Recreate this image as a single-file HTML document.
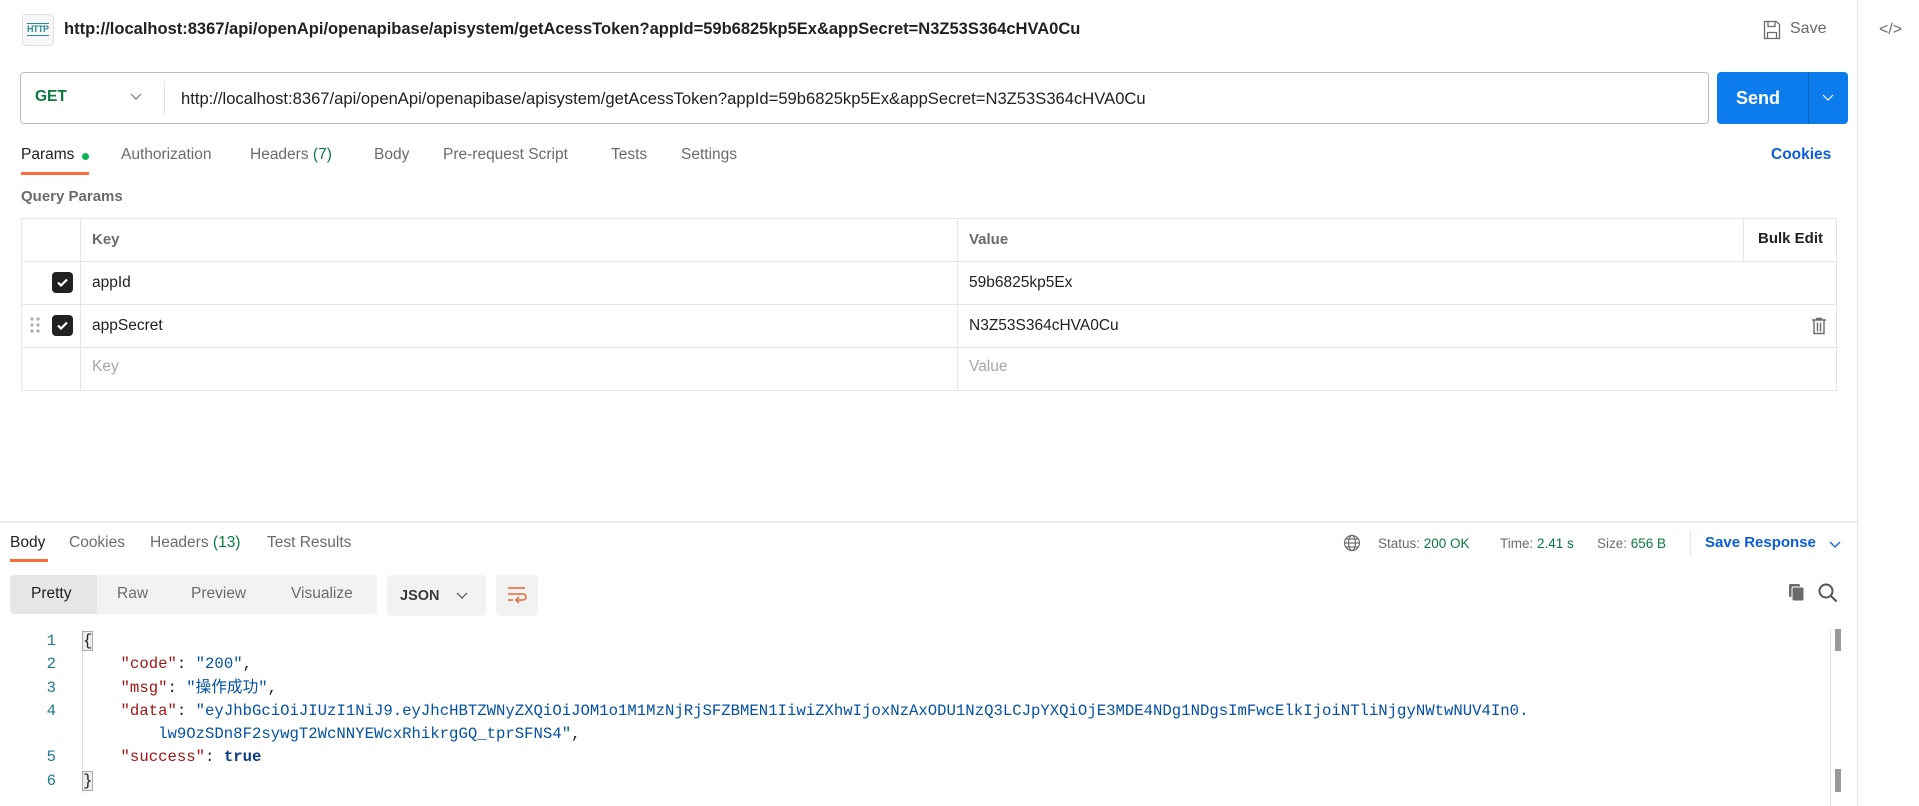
<!DOCTYPE html>
<html><head><meta charset="utf-8"><style>
*{box-sizing:border-box;margin:0;padding:0}
body{width:1919px;height:806px;background:#fff;font-family:"Liberation Sans","Noto Sans CJK SC",sans-serif;color:#212121;position:relative;overflow:hidden;font-size:15.5px}
.a{position:absolute;white-space:nowrap}
.tab{color:#6b6b6b}
.mono{font-family:"Liberation Mono","Noto Sans CJK SC",monospace;font-size:15.65px}
.k{color:#a31515}.s{color:#0451a5}
.hl{position:absolute;background:#e6e6e6;height:1px}
.vl{position:absolute;background:#e6e6e6;width:1px}
.cb{position:absolute;width:21px;height:21px;background:#212121;border-radius:4px}
.st{font-size:13.5px;color:#6b6b6b;top:536px}
</style></head><body>
<!-- top title -->
<div class="a" style="left:22px;top:14px;width:32px;height:32px;border:1px solid #e0e0e0;border-radius:4px;background:#f7f7f7"></div>
<div class="a" style="left:27px;top:23px;font-size:9px;color:#2b8a9a;font-weight:bold;letter-spacing:-0.5px;border-top:1px solid #2b8a9a;border-bottom:1px solid #2b8a9a;line-height:11px">HTTP</div>
<div class="a" style="left:64px;top:20px;font-size:16.5px;font-weight:bold;color:#212121">http://localhost:8367/api/openApi/openapibase/apisystem/getAcessToken?appId=59b6825kp5Ex&amp;appSecret=N3Z53S364cHVA0Cu</div>
<svg class="a" style="left:1763px;top:20px" width="18" height="20" viewBox="0 0 18 20"><path d="M1.5 1.5h12l3 3v14h-15z M5 1.5v5h7v-5 M4.5 18.5v-6h9v6" fill="none" stroke="#6b6b6b" stroke-width="1.3"/></svg>
<div class="a" style="left:1790px;top:20px;font-size:16px;color:#6b6b6b">Save</div>
<div class="vl" style="left:1857px;top:0;height:806px"></div>
<div class="a" style="left:1879px;top:21px;font-size:16px;color:#6b6b6b">&lt;/&gt;</div>
<!-- url bar -->
<div class="a" style="left:20px;top:72px;width:1689px;height:52px;border:1px solid #bdbdbd;border-radius:4px"></div>
<div class="a" style="left:35px;top:88px;font-weight:bold;color:#0b7a3e;font-size:15.5px">GET</div>
<svg class="a" style="left:130px;top:93px" width="12" height="8"><path d="M1 1l5 5 5-5" fill="none" stroke="#777" stroke-width="1.2"/></svg>
<div class="vl" style="left:164px;top:81px;height:34px"></div>
<div class="a" style="left:181px;top:89px;font-size:16.6px;color:#212121">http://localhost:8367/api/openApi/openapibase/apisystem/getAcessToken?appId=59b6825kp5Ex&amp;appSecret=N3Z53S364cHVA0Cu</div>
<div class="a" style="left:1717px;top:72px;width:131px;height:52px;background:#0c7bec;border-radius:4px"></div>
<div class="a" style="left:1808px;top:72px;width:1px;height:52px;background:#0a68c8"></div>
<div class="a" style="left:1736px;top:88px;font-size:18px;font-weight:bold;color:#fff">Send</div>
<svg class="a" style="left:1822px;top:94px" width="12" height="8"><path d="M1 1l5 5 5-5" fill="none" stroke="#fff" stroke-width="1.2"/></svg>
<!-- tabs -->
<div class="a" style="left:21px;top:146px;color:#212121">Params</div>
<div class="a" style="left:82px;top:153px;width:7px;height:7px;border-radius:50%;background:#0cb553"></div>
<div class="a" style="left:21px;top:172px;width:68px;height:3px;background:#ff6c37"></div>
<div class="a tab" style="left:121px;top:146px">Authorization</div>
<div class="a tab" style="left:250px;top:146px">Headers <span style="color:#0b7a3e">(7)</span></div>
<div class="a tab" style="left:374px;top:146px">Body</div>
<div class="a tab" style="left:443px;top:146px">Pre-request Script</div>
<div class="a tab" style="left:611px;top:146px">Tests</div>
<div class="a tab" style="left:681px;top:146px">Settings</div>
<div class="a" style="left:1771px;top:146px;color:#0b5ed7;font-weight:bold">Cookies</div>
<div class="a" style="left:21px;top:188px;color:#6b6b6b;font-weight:bold;font-size:15px">Query Params</div>
<!-- table -->
<div class="a" style="left:21px;top:218px;width:1816px;height:173px;border:1px solid #e6e6e6"></div>
<div class="hl" style="left:21px;top:261px;width:1816px"></div>
<div class="hl" style="left:21px;top:304px;width:1816px"></div>
<div class="hl" style="left:21px;top:347px;width:1816px"></div>
<div class="vl" style="left:80px;top:218px;height:173px"></div>
<div class="vl" style="left:957px;top:218px;height:173px"></div>
<div class="vl" style="left:1743px;top:218px;height:43px"></div>
<div class="a" style="left:92px;top:231px;color:#6b6b6b;font-weight:bold;font-size:15px">Key</div>
<div class="a" style="left:969px;top:231px;color:#6b6b6b;font-weight:bold;font-size:15px">Value</div>
<div class="a" style="left:1758px;top:230px;font-weight:bold;font-size:15px">Bulk Edit</div>
<div class="cb" style="left:52px;top:272px"></div>
<svg class="a" style="left:55px;top:275px" width="15" height="15"><path d="M3 7.5l3 3 6-6" fill="none" stroke="#fff" stroke-width="2.2"/></svg>
<div class="a" style="left:92px;top:274px">appId</div>
<div class="a" style="left:969px;top:274px">59b6825kp5Ex</div>
<svg class="a" style="left:30px;top:316px" width="12" height="18"><g fill="#aaa"><circle cx="2" cy="3" r="1.6"/><circle cx="8" cy="3" r="1.6"/><circle cx="2" cy="9" r="1.6"/><circle cx="8" cy="9" r="1.6"/><circle cx="2" cy="15" r="1.6"/><circle cx="8" cy="15" r="1.6"/></g></svg>
<div class="cb" style="left:52px;top:315px"></div>
<svg class="a" style="left:55px;top:318px" width="15" height="15"><path d="M3 7.5l3 3 6-6" fill="none" stroke="#fff" stroke-width="2.2"/></svg>
<div class="a" style="left:92px;top:317px">appSecret</div>
<div class="a" style="left:969px;top:317px">N3Z53S364cHVA0Cu</div>
<svg class="a" style="left:1811px;top:317px" width="16" height="18"><path d="M1 3h14 M5.5 3V1.5h5V3 M3 3v13.5h10V3 M6.5 5.5v9 M9.5 5.5v9" fill="none" stroke="#6b6b6b" stroke-width="1.4"/></svg>
<div class="a" style="left:92px;top:358px;color:#a6a6a6">Key</div>
<div class="a" style="left:969px;top:358px;color:#a6a6a6">Value</div>
<!-- separator -->
<div class="a" style="left:0;top:521px;width:1857px;height:2px;background:#ececec"></div>
<!-- response tabs -->
<div class="a" style="left:10px;top:534px;color:#212121">Body</div>
<div class="a" style="left:10px;top:559px;width:38px;height:3px;background:#ff6c37"></div>
<div class="a tab" style="left:69px;top:534px">Cookies</div>
<div class="a tab" style="left:150px;top:534px">Headers <span style="color:#0b7a3e">(13)</span></div>
<div class="a tab" style="left:267px;top:534px">Test Results</div>
<svg class="a" style="left:1343px;top:534px" width="18" height="18" viewBox="0 0 18 18"><g fill="none" stroke="#6b6b6b" stroke-width="1.2"><circle cx="9" cy="9" r="7.5"/><ellipse cx="9" cy="9" rx="3.5" ry="7.5"/><path d="M1.5 9h15 M3 5h12 M3 13h12"/></g></svg>
<div class="a st" style="left:1378px">Status: <span style="color:#0b7a3e">200 OK</span></div>
<div class="a st" style="left:1500px">Time: <span style="color:#0b7a3e">2.41 s</span></div>
<div class="a st" style="left:1597px">Size: <span style="color:#0b7a3e">656 B</span></div>
<div class="vl" style="left:1690px;top:530px;height:26px"></div>
<div class="a" style="left:1705px;top:534px;color:#0b5ed7;font-weight:bold;font-size:15px">Save Response</div>
<svg class="a" style="left:1829px;top:541px" width="12" height="8"><path d="M1 1l5 5 5-5" fill="none" stroke="#0b5ed7" stroke-width="1.3"/></svg>
<!-- pretty group -->
<div class="a" style="left:10px;top:575px;width:367px;height:39px;background:#f2f2f2;border-radius:4px"></div>
<div class="a" style="left:10px;top:575px;width:87px;height:39px;background:#e6e6e6;border-radius:4px 0 0 4px"></div>
<div class="a" style="left:31px;top:585px;font-size:15.5px">Pretty</div>
<div class="a tab" style="left:117px;top:585px">Raw</div>
<div class="a tab" style="left:191px;top:585px">Preview</div>
<div class="a tab" style="left:291px;top:585px">Visualize</div>
<div class="a" style="left:387px;top:575px;width:99px;height:41px;background:#f2f2f2;border-radius:4px"></div>
<div class="a" style="left:400px;top:588px;font-weight:bold;font-size:14.5px;color:#3a3a3a">JSON</div>
<svg class="a" style="left:456px;top:592px" width="12" height="8"><path d="M1 1l5 5 5-5" fill="none" stroke="#555" stroke-width="1.2"/></svg>
<div class="a" style="left:496px;top:575px;width:42px;height:41px;background:#f2f2f2;border-radius:4px"></div>
<svg class="a" style="left:506px;top:586px" width="22" height="20" viewBox="0 0 22 20"><path d="M2 2h17 M2 8h15a3 3 0 010 6h-6 M13 11l-3 3 3 3 M2 14h5" fill="none" stroke="#e8662f" stroke-width="1.5"/></svg>
<svg class="a" style="left:1788px;top:583px" width="18" height="20"><rect x="1" y="1" width="11" height="13" rx="1.5" fill="#6b6b6b"/><rect x="4" y="4" width="12" height="14" rx="1.5" fill="#6b6b6b" stroke="#fff" stroke-width="1"/></svg>
<svg class="a" style="left:1818px;top:583px" width="20" height="20"><circle cx="8" cy="8" r="6.5" fill="none" stroke="#555" stroke-width="2"/><path d="M13 13l5.5 5.5" stroke="#555" stroke-width="2.2"/></svg>
<!-- code -->
<div class="a" style="left:82px;top:629px;width:10px;height:164px;border-left:1px solid #ddd"></div>
<div class="mono a" style="left:0;top:630px;line-height:23.3px;color:#237893;width:56px;text-align:right">1<br>2<br>3<br>4<br><br>5<br>6</div>
<div class="mono a" style="left:83px;top:630px;line-height:23.3px;color:#212121">
<span style="background:#eee;outline:1px solid #aaa">{</span><br>
&nbsp;&nbsp;&nbsp;&nbsp;<span class="k">"code"</span>: <span class="s">"200"</span>,<br>
&nbsp;&nbsp;&nbsp;&nbsp;<span class="k">"msg"</span>: <span class="s">"操作成功"</span>,<br>
&nbsp;&nbsp;&nbsp;&nbsp;<span class="k">"data"</span>: <span class="s">"eyJhbGciOiJIUzI1NiJ9.eyJhcHBTZWNyZXQiOiJOM1o1M1MzNjRjSFZBMEN1IiwiZXhwIjoxNzAxODU1NzQ3LCJpYXQiOjE3MDE4NDg1NDgsImFwcElkIjoiNTliNjgyNWtwNUV4In0.</span><br>
&nbsp;&nbsp;&nbsp;&nbsp;&nbsp;&nbsp;&nbsp;&nbsp;<span class="s">lw9OzSDn8F2sywgT2WcNNYEWcxRhikrgGQ_tprSFNS4"</span>,<br>
&nbsp;&nbsp;&nbsp;&nbsp;<span class="k">"success"</span>: <b style="color:#0d3a8c">true</b><br>
<span style="background:#eee;outline:1px solid #aaa">}</span></div>
<div class="vl" style="left:1830px;top:629px;height:177px;background:#ddd"></div>
<div class="a" style="left:1835px;top:629px;width:6px;height:22px;background:#999"></div>
<div class="a" style="left:1835px;top:769px;width:6px;height:23px;background:#999"></div>
</body></html>
